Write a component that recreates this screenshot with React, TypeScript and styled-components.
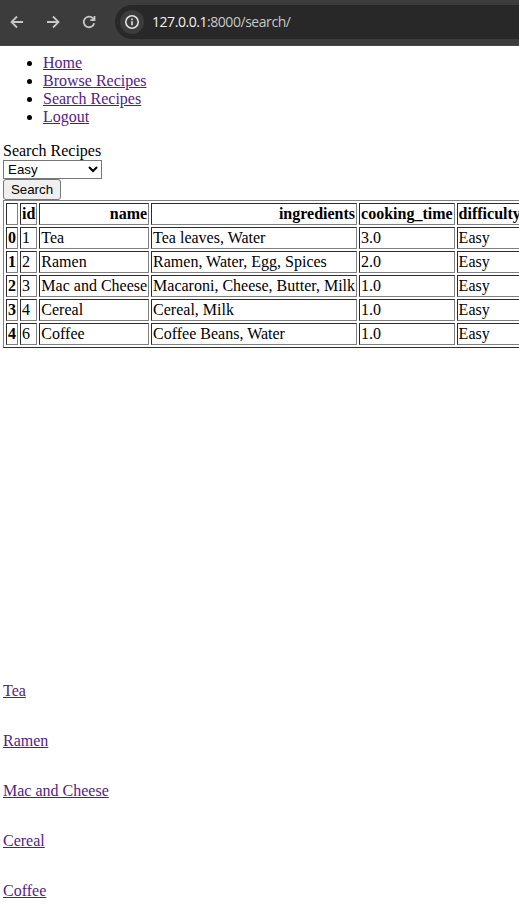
import React from "react";
import styled, { createGlobalStyle } from "styled-components";

const GlobalStyle = createGlobalStyle`
  html, body { margin: 0; background: #fff; overflow: hidden; }
  body { font: 16px/18px "Liberation Serif", "Times New Roman", serif; color: #000; }
`;

const Window = styled.div`
  width: 100%;
  height: 921px;
  overflow: hidden;
`;

const Toolbar = styled.header`
  display: flex;
  align-items: center;
  box-sizing: border-box;
  height: 46px;
  padding: 0 0 2px 7px;
  background: #3c3c3c;
  border-bottom: 1px solid #484848;
`;

const NavButton = styled.button`
  display: flex;
  align-items: center;
  justify-content: center;
  width: 20px;
  height: 20px;
  margin: 0 16px 0 0;
  padding: 0;
  border: 0;
  background: none;
  color: #c7c7c7;
`;

const AddressBar = styled.div`
  display: flex;
  flex: 1;
  align-items: center;
  box-sizing: border-box;
  height: 34px;
  padding-left: 5px;
  border-radius: 17px 0 0 17px;
  background: #282828;
`;

const SiteInfo = styled.span`
  display: flex;
  align-items: center;
  justify-content: center;
  width: 24px;
  height: 24px;
  border-radius: 50%;
  background: #3c3c3c;
  color: #e3e3e3;
`;

const Url = styled.span`
  margin-left: 8px;
  font: 14px/20px "Open Sans", "Noto Sans", sans-serif;
  letter-spacing: -0.45px;
  color: #c7c7c7;
`;

const Host = styled.span`
  color: #f1f1f1;
`;

const Page = styled.main`
  padding: 8px 0 0 3px;
`;

const Menu = styled.ul`
  margin: 0 0 16px;
  padding: 0 0 0 40px;
`;

const Link = styled.a`
  color: #551a8b;
  text-decoration: underline;
`;

const Form = styled.form`
  display: flex;
  flex-direction: column;
  align-items: flex-start;
`;

const Select = styled.select`
  box-sizing: border-box;
  width: 99px;
  height: 19px;
  margin: 0;
  padding: 0;
  border: 1px solid #767676;
  border-radius: 0;
  background: #fff;
  color: #000;
  font: 13.333px "Liberation Sans", Arial, sans-serif;
`;

const Submit = styled.button`
  box-sizing: border-box;
  width: 58px;
  height: 21px;
  padding: 0;
  border: 1px solid #767676;
  border-radius: 3px;
  background: #efefef;
  color: #000;
  font: 13.333px/17px "Liberation Sans", Arial, sans-serif;
`;

const Table = styled.table`
  border: 1px solid;
  border-color: #808080 #2c2c2c #2c2c2c #808080;
  border-collapse: separate;
  border-spacing: 2px;
  white-space: nowrap;
`;

const Cell = styled.td`
  height: 18px;
  padding: 1px;
  border: 1px solid;
  border-color: #2c2c2c #808080 #808080 #2c2c2c;
`;

const HeadCell = styled(Cell).attrs({ as: "th" })`
  text-align: right;
  font-weight: 700;
`;

const Results = styled.div`
  display: flex;
  flex-direction: column;
  align-items: flex-start;
  gap: 32px;
  margin-top: 334px;
`;

const menu = ["Home", "Browse Recipes", "Search Recipes", "Logout"];
const columns = ["", "id", "name", "ingredients", "cooking_time", "difficulty"];
const recipes = [
  { id: 1, name: "Tea", ingredients: "Tea leaves, Water", time: "3.0" },
  { id: 2, name: "Ramen", ingredients: "Ramen, Water, Egg, Spices", time: "2.0" },
  { id: 3, name: "Mac and Cheese", ingredients: "Macaroni, Cheese, Butter, Milk", time: "1.0" },
  { id: 4, name: "Cereal", ingredients: "Cereal, Milk", time: "1.0" },
  { id: 6, name: "Coffee", ingredients: "Coffee Beans, Water", time: "1.0" },
];

const Icon = ({ d }: { d: string }) => (
  <svg width="20" height="20" viewBox="0 0 20 20" fill="none" stroke="currentColor" strokeWidth="1.8">
    <path d={d} />
  </svg>
);

export default function App() {
  return (
    <Window>
      <GlobalStyle />
      <Toolbar>
        <NavButton aria-label="Back"><Icon d="M16 10H5M10 4.5L4.5 10L10 15.5" /></NavButton>
        <NavButton aria-label="Forward"><Icon d="M4 10H15M10 4.5L15.5 10L10 15.5" /></NavButton>
        <NavButton aria-label="Reload">
          <Icon d="M15.2 11.2A5.3 5.3 0 1 1 14 6.4L15.3 8M15.5 4V8.2H11.3" />
        </NavButton>
        <AddressBar>
          <SiteInfo>
            <svg width="16" height="16" viewBox="0 0 16 16" fill="none" stroke="currentColor" strokeWidth="1.6">
              <circle cx="8" cy="8" r="6.2" />
              <path d="M8 7.3V11.3M8 4.6V6.2" />
            </svg>
          </SiteInfo>
          <Url><Host>127.0.0.1</Host>:8000/search/</Url>
        </AddressBar>
      </Toolbar>
      <Page>
        <Menu>
          {menu.map((m) => <li key={m}><Link href="#">{m}</Link></li>)}
        </Menu>
        <Form onSubmit={(e) => e.preventDefault()}>
          <label htmlFor="difficulty">Search Recipes</label>
          <Select id="difficulty" defaultValue="Easy">
            <option>Easy</option>
            <option>Medium</option>
            <option>Hard</option>
          </Select>
          <Submit>Search</Submit>
        </Form>
        <Table>
          <thead>
            <tr>{columns.map((c) => <HeadCell key={c}>{c}</HeadCell>)}</tr>
          </thead>
          <tbody>
            {recipes.map((r, i) => (
              <tr key={r.id}>
                <HeadCell>{i}</HeadCell>
                <Cell>{r.id}</Cell>
                <Cell>{r.name}</Cell>
                <Cell>{r.ingredients}</Cell>
                <Cell>{r.time}</Cell>
                <Cell>Easy</Cell>
              </tr>
            ))}
          </tbody>
        </Table>
        <Results>
          {recipes.map((r) => <Link key={r.id} href="#">{r.name}</Link>)}
        </Results>
      </Page>
    </Window>
  );
}
